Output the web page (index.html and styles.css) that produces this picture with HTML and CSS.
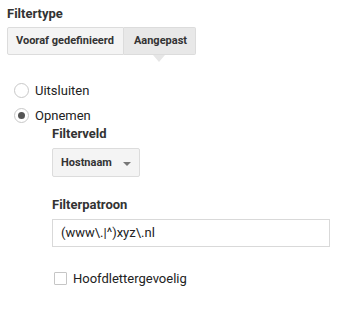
FILE: index.html
```html
<!DOCTYPE html>
<html>
<head>
<meta charset="utf-8">
<link rel="stylesheet" href="styles.css">
</head>
<body>
<div class="page">
  <div class="label">Filtertype</div>
  <div class="seg">
    <div class="seg-btn">Vooraf gedefinieerd</div>
    <div class="seg-btn active">Aangepast</div>
  </div>
  <div class="radios">
    <div class="radio"><span class="circle"></span>Uitsluiten</div>
    <div class="radio"><span class="circle checked"></span>Opnemen</div>
  </div>
  <div class="sub">
    <div class="label">Filterveld</div>
    <div class="select"><span>Hostnaam</span><span class="caret"></span></div>
    <div class="label label-pattern">Filterpatroon</div>
    <div class="input">(www\.|^)xyz\.nl</div>
    <div class="check"><span class="box"></span>Hoofdlettergevoelig</div>
  </div>
</div>
</body>
</html>
```

FILE: styles.css
```css
html, body {
  margin: 0;
  padding: 0;
  background: #ffffff;
}
body {
  font-family: Roboto, "Liberation Sans", Arial, sans-serif;
  font-size: 13px;
  color: #222222;
}
.page {
  padding: 6px 0 0 7px;
}
.label {
  font-weight: bold;
  font-size: 13px;
  line-height: 16px;
  color: #333333;
}
.seg {
  display: flex;
  margin-top: 5px;
  width: max-content;
}
.seg-btn {
  position: relative;
  box-sizing: border-box;
  height: 28px;
  line-height: 26px;
  padding: 0 9px 0 8px;
  font-size: 11px;
  font-weight: bold;
  color: #333333;
  background: #f4f4f4;
  border: 1px solid #dcdcdc;
  border-radius: 2px 0 0 2px;
}
.seg-btn.active {
  padding: 0 8px 0 10px;
  background: #e8e8e8;
  border-left: none;
  border-radius: 0 2px 2px 0;
}
.seg-btn.active::after {
  content: "";
  position: absolute;
  left: 50%;
  bottom: -8px;
  margin-left: -6px;
  width: 0;
  height: 0;
  border-left: 6px solid transparent;
  border-right: 6px solid transparent;
  border-top: 7px solid #e6e6e6;
}
.radios {
  margin: 25px 0 0 7px;
  display: flex;
  flex-direction: column;
  gap: 5px;
}
.radio {
  display: flex;
  align-items: center;
  height: 20px;
  gap: 6px;
}
.circle {
  box-sizing: border-box;
  width: 15px;
  height: 15px;
  border: 1px solid #c8c8c8;
  border-radius: 50%;
  display: flex;
  align-items: center;
  justify-content: center;
}
.circle.checked::after {
  content: "";
  width: 7px;
  height: 7px;
  border-radius: 50%;
  background: #555555;
}
.sub {
  margin: 1px 0 0 45px;
}
.select {
  box-sizing: border-box;
  margin-top: 6px;
  width: 88px;
  height: 29px;
  display: flex;
  align-items: center;
  justify-content: space-between;
  padding: 0 8px 0 8px;
  font-size: 11px;
  font-weight: bold;
  color: #333333;
  background: #f4f4f4;
  border: 1px solid #dcdcdc;
  border-radius: 2px;
}
.caret {
  width: 0;
  height: 0;
  border-left: 4px solid transparent;
  border-right: 4px solid transparent;
  border-top: 4px solid #777777;
  margin-top: 2px;
}
.label-pattern {
  margin-top: 20px;
}
.input {
  box-sizing: border-box;
  margin-top: 6px;
  width: 278px;
  height: 28px;
  line-height: 26px;
  padding: 0 8px;
  border: 1px solid #d9d9d9;
  font-size: 13px;
  color: #222222;
}
.check {
  display: flex;
  align-items: center;
  gap: 6px;
  margin: 23px 0 0 2px;
  height: 16px;
}
.box {
  box-sizing: border-box;
  width: 13px;
  height: 13px;
  border: 1px solid #c6c6c6;
  border-radius: 1px;
  background: #ffffff;
}
```
